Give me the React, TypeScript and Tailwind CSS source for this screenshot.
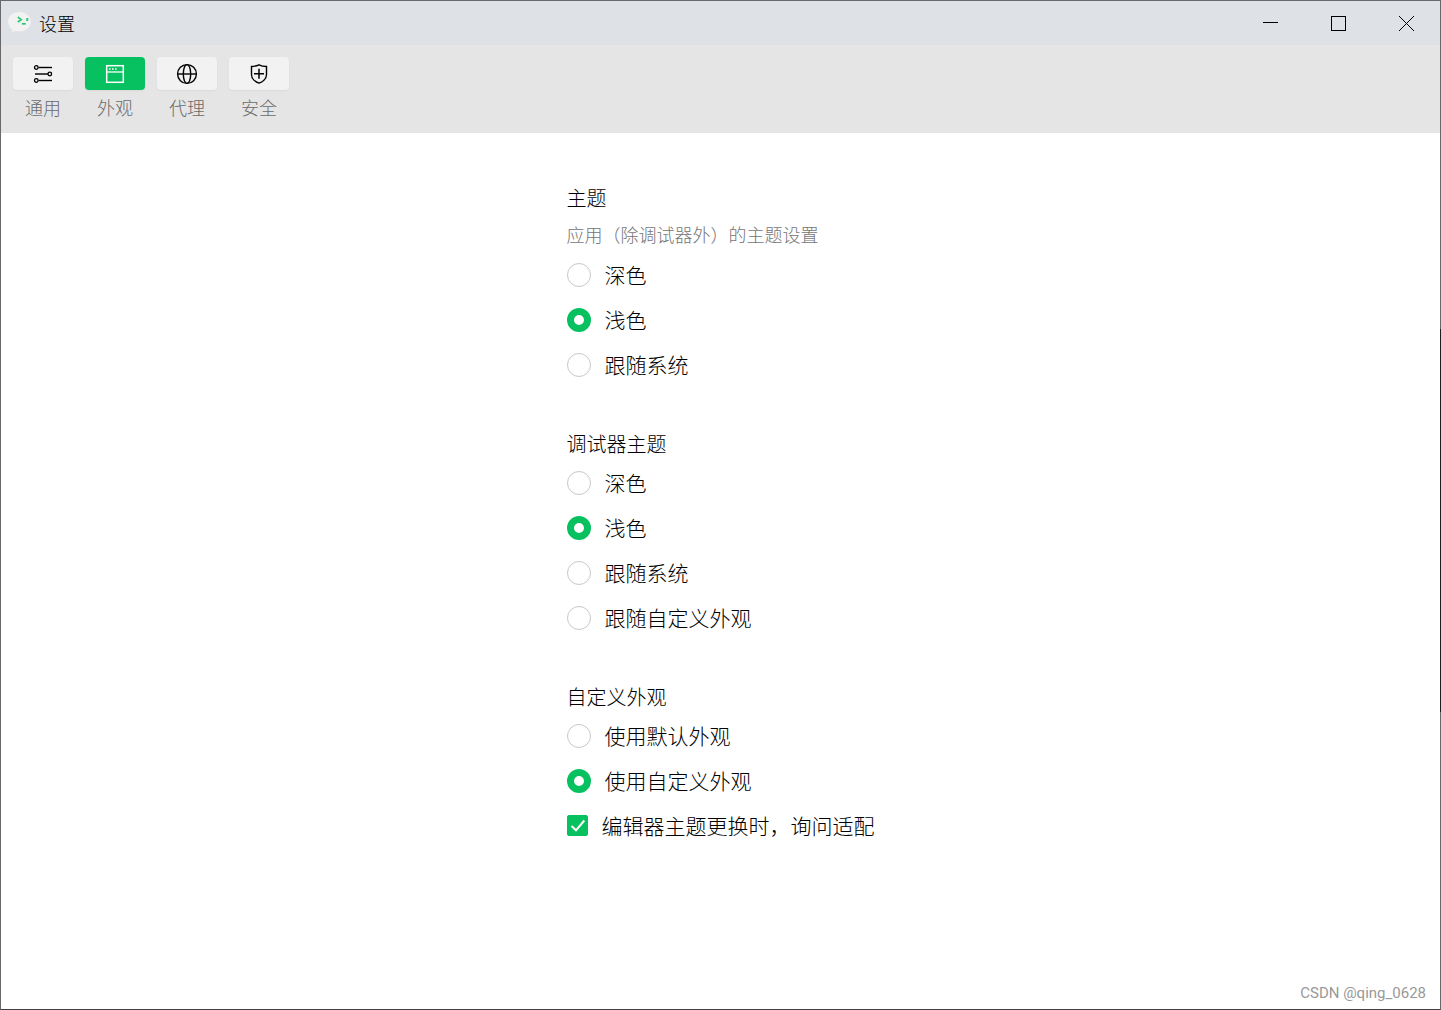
import React, { useState } from "react";
import clsx from "clsx";

interface Option {
  value: string;
  label: string;
}

interface RadioGroupProps {
  name: string;
  title: string;
  description?: string;
  options: Option[];
  defaultValue: string;
  children?: React.ReactNode;
}

const SlidersIcon = () => (
  <svg width="20" height="20" viewBox="0 0 20 20" fill="none" stroke="currentColor">
    <path d="M5.5 3.5H19" strokeWidth="1.4" />
    <path d="M2 10H15" strokeWidth="1.8" stroke="#333333" />
    <path d="M5.5 16.5H19" strokeWidth="1.4" />
    <circle cx="3.3" cy="3.5" r="1.8" strokeWidth="1.3" />
    <circle cx="16.8" cy="10" r="1.8" strokeWidth="1.3" />
    <circle cx="3.3" cy="16.5" r="1.8" strokeWidth="1.3" />
  </svg>
);

const WindowIcon = () => (
  <svg width="20" height="20" viewBox="0 0 20 20" fill="none" stroke="currentColor" strokeWidth="1.5">
    <rect x="1.7" y="1.7" width="16.6" height="16.6" />
    <path d="M1.7 8H18.3" strokeWidth="1.3" />
    <path d="M4 4.9h1.600M7 4.900h1.600M10 4.900h1.600" />
  </svg>
);

const GlobeIcon = () => (
  <svg width="22" height="22" viewBox="0 0 22 22" fill="none" stroke="currentColor" strokeWidth="1.4">
    <circle cx="11" cy="11" r="9.4" />
    <ellipse cx="11" cy="11" rx="3.7" ry="9.4" />
    <path d="M1.6 11H20.4" />
  </svg>
);

const ShieldIcon = () => (
  <svg width="22" height="22" viewBox="0 0 22 22" fill="none" stroke="currentColor" strokeWidth="1.4">
    <path d="M11 1.8C8.6 3 6 3.4 3.5 3.5V11.5C3.5 15.8 7.5 19 11 20.2C14.5 19 18.5 15.8 18.5 11.5V3.5C16 3.4 13.4 3 11 1.8Z" />
    <path d="M11 5.8V15.8M6 10.800H16" strokeWidth="1.5" />
  </svg>
);

const AppLogo = () => (
  <svg width="24" height="24" viewBox="0 0 24 24" fill="none">
    <path
      d="M12.500 1C6 1 1 5.200 1 10.700c0 3.300 1.700 6 4.300 7.700L4.900 21.500 8.600 19.700c1.200.4 2.500.6 3.900.6 6.400 0 11.300-4.200 11.300-9.600S18.900 1 12.500 1Z"
      fill="#f2f2f2"
    />
    <path d="M10.800 6 14.200 8.600 10.800 11" stroke="#2fc673" strokeWidth="1.700" />
    <path d="M14.800 12.800H18.800" stroke="#2fc673" strokeWidth="1.700" />
    <path d="M20.300 7V10" stroke="#2fc673" strokeWidth="2" />
  </svg>
);

const tabs = [
  { id: "general", label: "通用", Icon: SlidersIcon },
  { id: "appearance", label: "外观", Icon: WindowIcon },
  { id: "proxy", label: "代理", Icon: GlobeIcon },
  { id: "security", label: "安全", Icon: ShieldIcon },
];

const themeOptions: Option[] = [
  { value: "dark", label: "深色" },
  { value: "light", label: "浅色" },
  { value: "system", label: "跟随系统" },
];

const debuggerOptions: Option[] = [...themeOptions, { value: "custom", label: "跟随自定义外观" }];

const customOptions: Option[] = [
  { value: "default", label: "使用默认外观" },
  { value: "custom", label: "使用自定义外观" },
];

const TitleBar = () => (
  <header className="flex h-11 items-center bg-[#dee1e6] pl-1.5">
    <AppLogo />
    <h1 className="ml-2 text-lg text-black">设置</h1>
    <div className="ml-auto flex h-full">
      <button aria-label="最小化" className="flex w-17 items-center justify-center">
        <svg width="15" height="15" viewBox="0 0 15 15" stroke="black">
          <path d="M0 6.5H15" />
        </svg>
      </button>
      <button aria-label="最大化" className="flex w-17 items-center justify-center">
        <svg width="15" height="15" viewBox="0 0 15 15" fill="none" stroke="black">
          <rect x="0.5" y="0.5" width="14" height="14" />
        </svg>
      </button>
      <button aria-label="关闭" className="flex w-17 items-center justify-center">
        <svg width="15" height="15" viewBox="0 0 15 15" stroke="black">
          <path d="M0 0L15 15M15 0L0 15" />
        </svg>
      </button>
    </div>
  </header>
);

const RadioGroup: React.FC<RadioGroupProps> = ({
  name,
  title,
  description,
  options,
  defaultValue,
  children,
}) => {
  const [value, setValue] = useState(defaultValue);

  return (
    <fieldset>
      <legend className="h-[33px] text-xl leading-[33px]">{title}</legend>
      {description && (
        <p className="h-[38px] pt-1 text-lg leading-[33px] text-[#757575]">{description}</p>
      )}
      {options.map((option) => (
        <label key={option.value} className="flex h-[45px] items-center gap-3.5 text-[21px]">
          <input
            type="radio"
            name={name}
            value={option.value}
            checked={value === option.value}
            onChange={() => setValue(option.value)}
            className="size-6 appearance-none rounded-full border border-[#c8c8c8] bg-white checked:border-[7px] checked:border-[#07c160]"
          />
          {option.label}
        </label>
      ))}
      {children}
    </fieldset>
  );
};

const App: React.FC = () => {
  const [activeTab, setActiveTab] = useState("appearance");
  const [askAdapt, setAskAdapt] = useState(true);

  return (
    <div className="relative flex min-h-screen flex-col border border-[#69696d] border-b-[#404040] bg-white font-['Noto_Sans_CJK_SC',sans-serif] font-light text-black">
      <TitleBar />

      <nav className="flex h-22 gap-3 bg-[#e5e5e5] px-3 pt-3">
        {tabs.map(({ id, label, Icon }) => (
          <button
            key={id}
            onClick={() => setActiveTab(id)}
            className="flex w-15 flex-col items-center text-lg text-[#6b6b6b]"
          >
            <span
              className={clsx(
                "flex h-[33px] w-full items-center justify-center rounded shadow-xs",
                activeTab === id ? "bg-[#07c160] text-white" : "bg-[#f2f2f2] text-black"
              )}
            >
              <Icon />
            </span>
            <span className="mt-[3px]">{label}</span>
          </button>
        ))}
      </nav>

      <main className="mx-auto flex w-fit flex-1 flex-col gap-10 pt-12 pb-12">
        <RadioGroup
          name="theme"
          title="主题"
          description="应用（除调试器外）的主题设置"
          options={themeOptions}
          defaultValue="light"
        />
        <RadioGroup
          name="debugger-theme"
          title="调试器主题"
          options={debuggerOptions}
          defaultValue="light"
        />
        <RadioGroup
          name="custom-appearance"
          title="自定义外观"
          options={customOptions}
          defaultValue="custom"
        >
          <label className="flex h-[45px] items-center gap-3.5 text-[21px]">
            <span className="grid">
              <input
                type="checkbox"
                checked={askAdapt}
                onChange={(e) => setAskAdapt(e.target.checked)}
                className="peer size-[21px] appearance-none rounded-xs border border-[#c8c8c8] [grid-area:1/1] checked:border-[#07c160] checked:bg-[#07c160]"
              />
              <svg
                viewBox="0 0 21 21"
                fill="none"
                stroke="white"
                strokeWidth="2"
                className="pointer-events-none invisible size-[21px] [grid-area:1/1] peer-checked:visible"
              >
                <path d="M4.500 11L9 15.300L17.300 5.500" />
              </svg>
            </span>
            编辑器主题更换时，询问适配
          </label>
        </RadioGroup>
      </main>

      {/* Watermark */}
      <span className="absolute right-3.5 bottom-1.5 font-['Roboto',sans-serif] text-[15px] leading-5 font-normal text-[#999999]">
        CSDN @qing_0628
      </span>
      {/* Darker stretch of the window edge */}
      <span className="absolute top-[32.5%] -right-px h-[38%] w-px bg-[#1e1e1e]" />
    </div>
  );
};

export default App;
